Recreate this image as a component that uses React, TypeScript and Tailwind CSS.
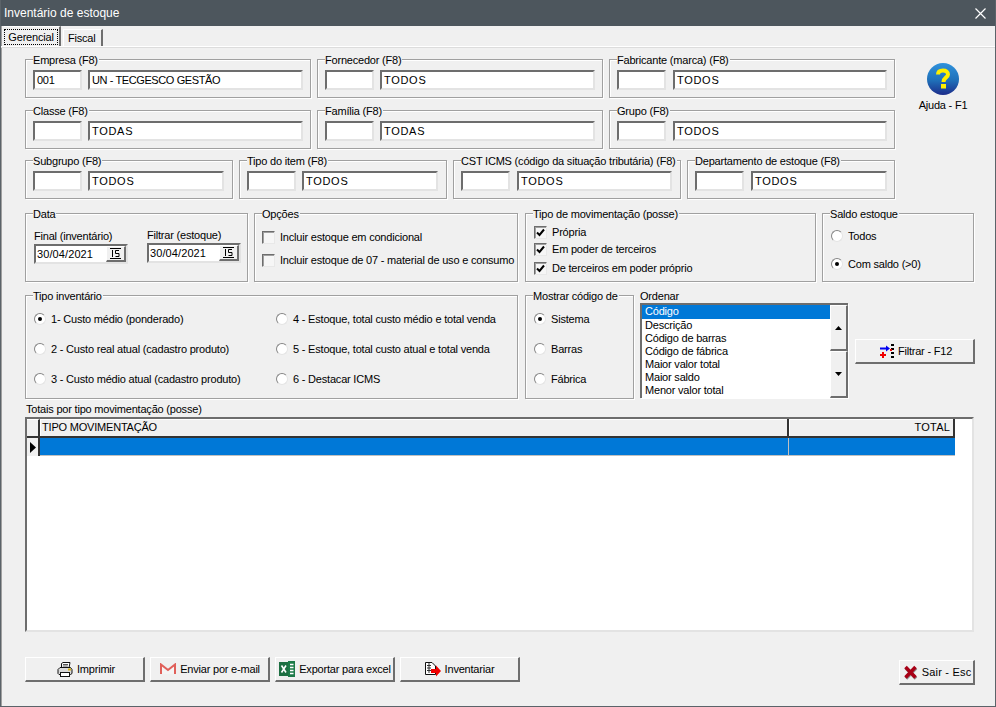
import type { ReactNode } from "react";

const raised =
  "border-t border-l border-t-white border-l-white border-b-2 border-r-2 border-b-[#6e6e6e] border-r-[#6e6e6e] bg-[#f0f0f0]";
const sunken =
  "border-t-2 border-l-2 border-t-[#6d6d6d] border-l-[#6d6d6d] border-b-2 border-r-2 border-b-[#e3e3e3] border-r-[#e3e3e3] bg-white";

function Group({ label, className, children }: { label: string; className: string; children?: ReactNode }) {
  return (
    <div className={`relative shrink-0 border border-[#a0a0a0] shadow-[1px_1px_0_#fff,inset_1px_1px_0_#fff] ${className}`}>
      <span className="absolute left-[7px] top-[-7px] bg-[#f0f0f0] pr-[1px] leading-[14px] whitespace-nowrap">{label}</span>
      {children}
    </div>
  );
}

function Edit({ value, className }: { value?: string; className: string }) {
  return (
    <div className={`h-[20px] shrink-0 pl-[2px] leading-[16px] whitespace-nowrap ${sunken} ${className}`}>
      {value}
    </div>
  );
}

function Lookup({ label, value, className, wide, first }: { label: string; value?: string; className: string; wide: string; first?: string }) {
  return (
    <Group label={label} className={`h-[39px] ${className}`}>
      <div className="flex gap-[6px] pl-[7px] pt-[10px]">
        <Edit value={first} className="w-[49px] tracking-[-0.3px]" />
        <Edit value={value} className={wide} />
      </div>
    </Group>
  );
}

function Radio({ label, checked, className }: { label: string; checked?: boolean; className?: string }) {
  return (
    <div className={`flex items-center whitespace-nowrap ${className ?? ""}`}>
      <span className="flex size-[12px] shrink-0 items-center justify-center rounded-full border border-t-[#858585] border-l-[#858585] border-r-[#e4e4e4] border-b-[#e4e4e4] bg-white">
        {checked && <span className="size-[4px] rounded-full bg-black" />}
      </span>
      <span className="ml-[5px]">{label}</span>
    </div>
  );
}

function Check({ label, checked, className }: { label: string; checked?: boolean; className?: string }) {
  return (
    <div className={`flex items-center whitespace-nowrap ${className ?? ""}`}>
      <span className="flex size-[13px] shrink-0 items-center justify-center border border-t-[#6d6d6d] border-l-[#6d6d6d] border-r-[#e8e8e8] border-b-[#e8e8e8] bg-[#f6f6f6] shadow-[inset_1px_1px_0_#a0a0a0]">
        {checked && (
          <svg width="9" height="9" viewBox="0 0 9 9">
            <path d="M1 4.5 L3.5 7 L8 1.5" fill="none" stroke="#000" strokeWidth="2" />
          </svg>
        )}
      </span>
      <span className="ml-[5px]">{label}</span>
    </div>
  );
}

function DateField({ label, className }: { label: string; className?: string }) {
  return (
    <div className={`w-[94px] shrink-0 ${className ?? ""}`}>
      <div className="h-[15px] leading-[14px] whitespace-nowrap">{label}</div>
      <div className={`flex h-[20px] items-center justify-between pl-[1px] ${sunken}`}>
        <span className="leading-[16px] tracking-[0.1px]">30/04/2021</span>
        <span className={`flex h-[16px] w-[20px] items-center justify-center ${raised}`}>
          <svg width="11" height="11" viewBox="0 0 11 11">
            <path d="M0 .5H11M0 10.5H11" stroke="#000" />
            <path d="M2.5 2V9M5.5 2.5H9M5.5 2.5V5.5H9V8.5H5.5" fill="none" stroke="#000" />
          </svg>
        </span>
      </div>
    </div>
  );
}

function Btn({ icon, label, className }: { icon: ReactNode; label: string; className: string }) {
  return (
    <div className={`flex h-[25px] shrink-0 items-center justify-center gap-[4px] whitespace-nowrap ${raised} ${className}`}>
      <span className="flex shrink-0">{icon}</span>
      <span>{label}</span>
    </div>
  );
}

const PrinterIcon = (
  <svg width="16" height="15" viewBox="0 0 16 15">
    <path d="M4.5 6V1.5L6 .5H13L12 6Z" fill="#fff" stroke="#111" />
    <path d="M6 2.5H11M5.8 4H10.8" stroke="#555" />
    <path d="M1 7.5L3 5.5H13.5L15 7.5V11.5L13.5 12.5H2L1 11.5Z" fill="#d9d9d9" stroke="#111" />
    <rect x="3.5" y="10.5" width="9" height="4" fill="#fff" stroke="#111" />
    <path d="M11 7.5H14" stroke="#d9b310" strokeWidth="2" />
  </svg>
);

const GmailIcon = (
  <svg width="16" height="12" viewBox="0 0 16 12">
    <path d="M1 1L8 7L15 1V11H1Z" fill="#f4f4f4" />
    <path d="M1 11V1.5L8 7L15 1.5V11" fill="none" stroke="#e0605a" strokeWidth="2" />
  </svg>
);

const ExcelIcon = (
  <svg width="16" height="16" viewBox="0 0 16 16">
    <rect x="0" y="1" width="10" height="14" fill="#1d6f42" />
    <rect x="9" y="0" width="7" height="16" fill="#1d7a48" />
    <path d="M2.5 4.5L7 11.5M7 4.5L2.5 11.5" stroke="#fff" strokeWidth="1.6" />
    <path d="M11 3.5H14.5M11 6.5H14.5M11 9.5H14.5M11 12.5H14.5" stroke="#fff" strokeWidth="1.4" />
  </svg>
);

const InventoryIcon = (
  <svg width="16" height="15" viewBox="0 0 16 15">
    <path d="M.5.5H7L10.5 4V12.5H.5Z" fill="#fff" stroke="#111" />
    <path d="M2 3.5H6M2 6H6M2 8.5H6M4 1V11" stroke="#333" />
    <path d="M6 7H11V3.5L16 9L11 14.5V11H6Z" fill="#f00000" />
  </svg>
);

const FilterIcon = (
  <svg width="14" height="15" viewBox="0 0 14 15">
    <path d="M0 4.5H7" stroke="#0000f0" strokeWidth="2" />
    <path d="M6 1.5L10 4.5L6 7.5Z" fill="#0000f0" />
    <path d="M0 11H6M3 8V14" stroke="#f00000" strokeWidth="2" />
    <rect x="11" y="0" width="3" height="2" fill="#000" />
    <rect x="11" y="4" width="3" height="2" fill="#000" />
    <rect x="11" y="8" width="3" height="2" fill="#000" />
    <rect x="11" y="12" width="3" height="2" fill="#000" />
    <rect x="10" y="5" width="2" height="2" fill="#f00000" />
  </svg>
);

const ExitIcon = (
  <svg width="15" height="15" viewBox="0 0 15 15">
    <path d="M3 3L13 13.5M13 3L3 13.5" stroke="#8f8f8f" strokeWidth="3.5" />
    <path d="M2.5 2L12.5 12.5M12.5 2L2.5 12.5" stroke="#a80016" strokeWidth="3.5" />
  </svg>
);

const orderItems = [
  "Descrição",
  "Código de barras",
  "Código de fábrica",
  "Maior valor total",
  "Maior saldo",
  "Menor valor total",
];

export default function App() {
  return (
    <div className="flex h-[707px] w-[996px] flex-col overflow-hidden border-x border-b border-x-[#5b6369] border-b-[#5b6369] bg-[#f0f0f0] font-['Liberation_Sans',Arial,sans-serif] text-[11px] tracking-[-0.2px] text-black shadow-[inset_1px_0_0_#a0a0a0]">
      <div className="-mx-[1px] flex h-[26px] shrink-0 items-center justify-between bg-[#4d565d] pl-[4px] pr-[10px] text-[12px] tracking-normal text-white">
        <span>Inventário de estoque</span>
        <svg width="11" height="11" viewBox="0 0 11 11">
          <path d="M.5.5L10.5 10.5M10.5.5L.5 10.5" stroke="#fff" strokeWidth="1.2" />
        </svg>
      </div>

      <div className="flex h-[21px] shrink-0 items-end border-b border-b-white pl-[3px] shadow-[0_1px_0_#dcdcdc]">
        <div className="mr-[2px] flex h-[20px] w-[57px] items-center justify-center border-r-2 border-r-[#6e6e6e] border-t border-t-white pr-[1px]">
          <span className="flex h-[16px] w-[55px] items-center justify-center border border-dotted border-black leading-[14px]">Gerencial</span>
        </div>
        <div className="flex h-[17px] w-[40px] items-center border-l border-l-white border-r-2 border-r-[#6e6e6e] border-t border-t-white pl-[4px]">Fiscal</div>
      </div>

      <div className="flex flex-col pl-[24px] pt-[12px]">
        <div className="flex">
          <div className="flex w-[870px] flex-col">
            <div className="flex gap-[6px]">
              <Lookup label="Empresa (F8)" first="001" value="UN - TECGESCO GESTÃO" className="w-[286px]" wide="w-[215px] tracking-[-0.4px]" />
              <Lookup label="Fornecedor (F8)" value="TODOS" className="w-[286px]" wide="w-[215px] tracking-[0.7px]" />
              <Lookup label="Fabricante (marca) (F8)" value="TODOS" className="w-[286px]" wide="ml-[1px] w-[214px] tracking-[0.7px]" />
            </div>
            <div className="mt-[12px] flex gap-[6px]">
              <Lookup label="Classe (F8)" value="TODAS" className="w-[286px]" wide="w-[215px] tracking-[0.7px]" />
              <Lookup label="Família (F8)" value="TODAS" className="w-[286px]" wide="w-[215px] tracking-[0.7px]" />
              <Lookup label="Grupo (F8)" value="TODOS" className="w-[286px]" wide="ml-[1px] w-[214px] tracking-[0.7px]" />
            </div>
            <div className="mt-[11px] flex gap-[6px]">
              <Lookup label="Subgrupo (F8)" value="TODOS" className="w-[208px]" wide="w-[136px] tracking-[0.7px]" />
              <Lookup label="Tipo do item (F8)" value="TODOS" className="w-[208px]" wide="w-[136px] tracking-[0.7px]" />
              <Lookup label="CST ICMS (código da situação tributária) (F8)" value="TODOS" className="w-[228px]" wide="ml-[1px] w-[155px] tracking-[0.7px]" />
              <Lookup label="Departamento de estoque (F8)" value="TODOS" className="w-[208px]" wide="ml-[1px] w-[136px] tracking-[0.7px]" />
            </div>
          </div>
          <div className="flex w-[96px] flex-col items-center pt-[4px]">
            <svg width="32" height="32" viewBox="0 0 32 32">
              <defs>
                <linearGradient id="helpBlue" x1="0" y1="0" x2="0" y2="1">
                  <stop offset="0" stopColor="#2f92dc" />
                  <stop offset="0.55" stopColor="#1f6fb8" />
                  <stop offset="1" stopColor="#1c2c8a" />
                </linearGradient>
              </defs>
              <circle cx="16" cy="16" r="16" fill="url(#helpBlue)" />
              <path d="M11 11.5C11 8.5 13.5 7.5 16 7.5C19 7.5 21 9 21 11.5C21 14.5 16.5 14.5 16.5 19" fill="none" stroke="#ffef00" strokeWidth="4" />
              <rect x="14" y="21" width="5" height="4.5" fill="#ffef00" />
            </svg>
            <span className="mt-[3px] leading-[14px] whitespace-nowrap">Ajuda - F1</span>
          </div>
        </div>

        <div className="mt-[14px] flex">
          <Group label="Data" className="h-[69px] w-[223px]">
            <div className="flex pl-[8px] pt-[15px]">
              <DateField label="Final (inventário)" />
              <DateField label="Filtrar (estoque)" className="ml-[19px] -mt-[1px]" />
            </div>
          </Group>
          <Group label="Opções" className="ml-[6px] h-[69px] w-[264px]">
            <div className="flex flex-col gap-[7px] pl-[7px] pt-[15px]">
              <Check label="Incluir estoque em condicional" className="h-[16px]" />
              <Check label="Incluir estoque de 07 - material de uso e consumo" className="h-[16px]" />
            </div>
          </Group>
          <Group label="Tipo de movimentação (posse)" className="ml-[7px] h-[69px] w-[291px]">
            <div className="flex flex-col pl-[8px] pt-[10px]">
              <Check label="Própria" checked className="h-[17px]" />
              <Check label="Em poder de terceiros" checked className="h-[17px]" />
              <Check label="De terceiros em poder próprio" checked className="mt-[2px] h-[17px]" />
            </div>
          </Group>
          <Group label="Saldo estoque" className="ml-[6px] h-[69px] w-[152px]">
            <div className="flex flex-col pl-[8px] pt-[8px]">
              <Radio label="Todos" className="h-[28px]" />
              <Radio label="Com saldo (>0)" checked className="h-[28px]" />
            </div>
          </Group>
        </div>

        <div className="mt-[13px] flex items-start">
          <Group label="Tipo inventário" className="h-[104px] w-[493px]">
            <div className="grid grid-cols-[242px_1fr] pl-[8px] pt-[8px]">
              <Radio label="1- Custo médio (ponderado)" checked className="h-[30px]" />
              <Radio label="4 - Estoque, total custo médio e total venda" className="h-[30px]" />
              <Radio label="2 - Custo real atual (cadastro produto)" className="h-[30px]" />
              <Radio label="5 - Estoque, total custo atual e total venda" className="h-[30px]" />
              <Radio label="3 - Custo médio atual (cadastro produto)" className="h-[30px]" />
              <Radio label="6 - Destacar ICMS" className="h-[30px]" />
            </div>
          </Group>
          <Group label="Mostrar código de" className="ml-[7px] h-[104px] w-[109px]">
            <div className="flex flex-col pl-[8px] pt-[8px]">
              <Radio label="Sistema" checked className="h-[30px]" />
              <Radio label="Barras" className="h-[30px]" />
              <Radio label="Fábrica" className="h-[30px]" />
            </div>
          </Group>
          <div className="ml-[6px] -mt-[5px] w-[208px] shrink-0">
            <div className="h-[13px] leading-[13px]">Ordenar</div>
            <div className="flex h-[95px] border-t-2 border-l-2 border-t-[#6d6d6d] border-l-[#6d6d6d] bg-white shadow-[1px_1px_0_#fff]">
              <div className="w-[188px] overflow-hidden leading-[13px]">
                <div className="h-[14px] bg-[#0078d7] pl-[3px] text-white">Código</div>
                {orderItems.map((item) => (
                  <div key={item} className="h-[13px] pl-[3px] whitespace-nowrap">{item}</div>
                ))}
              </div>
              <div className="flex w-[18px] flex-col">
                <div className={`flex h-[46px] items-center justify-center ${raised}`}>
                  <svg width="7" height="4" viewBox="0 0 7 4"><path d="M3.5 0L7 4H0Z" /></svg>
                </div>
                <div className={`flex h-[47px] items-center justify-center ${raised}`}>
                  <svg width="7" height="4" viewBox="0 0 7 4"><path d="M0 0H7L3.5 4Z" /></svg>
                </div>
              </div>
            </div>
          </div>
          <Btn icon={FilterIcon} label="Filtrar - F12" className="ml-[7px] mt-[44px] w-[120px] pl-[3px]" />
        </div>

        <div className="mt-[3px] h-[14px] pl-[1px] leading-[14px]">Totais por tipo movimentação (posse)</div>
        <div className="mt-[1px] flex h-[215px] w-[949px] flex-col border-t-2 border-l-2 border-t-[#6d6d6d] border-l-[#6d6d6d] border-r-2 border-b-2 border-r-[#e3e3e3] border-b-[#e3e3e3] bg-white">
          <div className="flex h-[19px] w-[928px] shrink-0 border-b-2 border-b-[#333] bg-[#f0f0f0]">
            <div className="w-[13px] shrink-0 border-r-2 border-r-[#333] border-t border-t-white" />
            <div className="flex-1 border-r-2 border-r-[#333] pl-[2px] leading-[16px] shadow-[inset_1px_1px_0_#fff]">TIPO MOVIMENTAÇÃO</div>
            <div className="w-[166px] shrink-0 border-r-2 border-r-[#333] pr-[3px] text-right leading-[16px] tracking-[0.2px] shadow-[inset_1px_1px_0_#fff]">TOTAL</div>
          </div>
          <div className="flex h-[18px] w-[928px] shrink-0">
            <div className="flex w-[13px] shrink-0 items-center justify-center border-r-2 border-r-[#333] bg-[#f0f0f0]">
              <svg width="6" height="11" viewBox="0 0 6 11"><path d="M0 0L6 5.5L0 11Z" /></svg>
            </div>
            <div className="flex-1 border-b border-b-[#c0c0c0] border-r border-r-[#c0c0c0] bg-[#0078d7]" />
            <div className="w-[166px] shrink-0 border-b border-b-[#c0c0c0] bg-[#0078d7]" />
          </div>
        </div>

        <div className="mt-[25px] flex w-[950px] items-start">
          <div className="flex gap-[5px]">
            <Btn icon={PrinterIcon} label="Imprimir" className="w-[120px] pl-[3px]" />
            <Btn icon={GmailIcon} label="Enviar por e-mail" className="w-[120px] pl-[1px]" />
            <Btn icon={ExcelIcon} label="Exportar para excel" className="w-[120px] pl-[1px]" />
            <Btn icon={InventoryIcon} label="Inventariar" className="w-[120px]" />
          </div>
          <Btn icon={ExitIcon} label="Sair - Esc" className="ml-auto mt-[3px] w-[76px] pl-[1px] tracking-[0.2px]" />
        </div>
      </div>
    </div>
  );
}
